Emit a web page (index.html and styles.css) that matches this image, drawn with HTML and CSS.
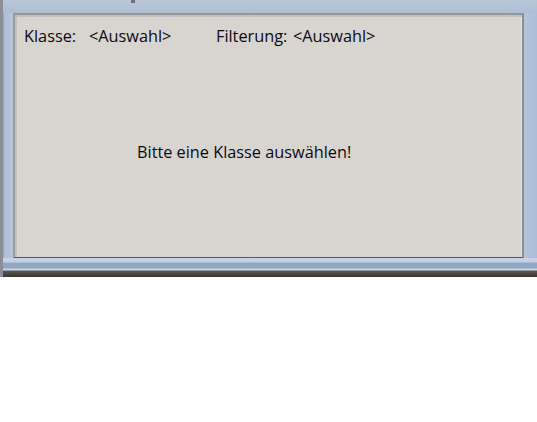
FILE: index.html
```html
<!DOCTYPE html>
<html lang="de">
<head>
<meta charset="utf-8">
<link rel="stylesheet" href="styles.css">
</head>
<body>
<div class="window">
  <div class="titlebar"><span class="knob"></span></div>
  <div class="middle">
    <div class="panel">
      <div class="filters">
        <span class="label">Klasse:</span>
        <span class="value">&lt;Auswahl&gt;</span>
        <span class="label second">Filterung:</span>
        <span class="value">&lt;Auswahl&gt;</span>
      </div>
      <div class="message">Bitte eine Klasse auswählen!</div>
    </div>
  </div>
  <div class="bottom"></div>
</div>
</body>
</html>
```
FILE: styles.css
```css
html, body {
  margin: 0;
  padding: 0;
  background: #ffffff;
}
body {
  font-family: "Open Sans", "Noto Sans", sans-serif;
  font-size: 16.3px;
  color: #0a0a14;
}
.window {
  width: 537px;
  height: 277px;
  display: flex;
  flex-direction: column;
  background: linear-gradient(90deg, #8a8f97 0px, #8a8f97 3px, #aebfd6 4px, #b6c6da 14px, #b6c6da 522px, #aabdd6 537px);
}
.titlebar {
  height: 13px;
  position: relative;
  background: linear-gradient(180deg, #b9c7d9, #adbdd3);
  margin-left: 3px;
}
.knob {
  position: absolute;
  left: 128px;
  top: 0;
  width: 4px;
  height: 3px;
  background: #6c7078;
}
.middle {
  flex: 1;
  display: flex;
  padding: 0 13px 0 13px;
}
.panel {
  flex: 1;
  background: #d8d4d0;
  border-top: 2px solid #96959a;
  border-left: 2px solid #9a9ca2;
  border-right: 2px solid #8a8c92;
  border-bottom: 1px solid #55585f;
  box-shadow: inset 2px 2px 0 #c1bfc0, inset -1px 0 0 #e6e3e0;
  padding: 11px 0 0 9px;
}
.filters {
  display: flex;
  align-items: baseline;
  line-height: 20px;
}
.label {
  width: 65px;
}
.value {
  width: 127px;
}
.label.second {
  width: 77px;
}
.message {
  margin-top: 96px;
  padding-left: 113px;
  line-height: 20px;
}
.bottom {
  height: 19px;
  margin-left: 3px;
  background: linear-gradient(180deg, #c7d4e6 0px, #c2d0e3 4px, #93a8c3 5px, #8fa4c0 10px, #c9d6e6 11px, #c9d6e6 12px, #5b564f 13px, #3b3631 19px);
}
```
